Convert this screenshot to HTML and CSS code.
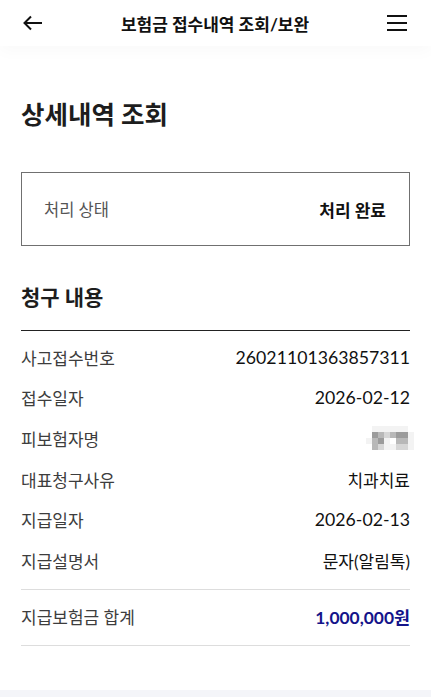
FILE: index.html
```html
<!DOCTYPE html>
<html lang="ko">
<head>
  <meta charset="UTF-8">
  <title>보험금 접수내역 조회/보완</title>
  <meta name="viewport" content="width=device-width, initial-scale=1.0">
  <link rel="stylesheet" href="styles.css">
</head>
<body>
  <header class="top-bar">
    <button class="icon-btn" aria-label="뒤로">
      <svg width="22" height="16" viewBox="0 0 22 16">
        <path d="M20 8H2.5M9 1.5L2.5 8L9 14.5" fill="none" stroke="#111" stroke-width="2"/>
      </svg>
    </button>
    <h1 class="top-title">보험금 접수내역 조회/보완</h1>
    <button class="icon-btn" aria-label="메뉴">
      <svg width="22" height="18" viewBox="0 0 22 18">
        <path d="M1 2H21M1 9H21M1 16H21" fill="none" stroke="#111" stroke-width="2"/>
      </svg>
    </button>
  </header>

  <main class="content">
    <h2 class="page-title">상세내역 조회</h2>

    <div class="status-box">
      <span class="status-label">처리 상태</span>
      <span class="status-value">처리 완료</span>
    </div>

    <h3 class="section-title">청구 내용</h3>

    <dl class="detail-list">
      <div class="detail-row">
        <dt>사고접수번호</dt>
        <dd class="num">26021101363857311</dd>
      </div>
      <div class="detail-row">
        <dt>접수일자</dt>
        <dd class="num">2026-02-12</dd>
      </div>
      <div class="detail-row">
        <dt>피보험자명</dt>
        <dd>
          <!-- masked name -->
          <span class="mosaic" aria-label="가려진 이름">
            <i class="s0"></i><i class="s1"></i><i class="s1"></i><i class="s1"></i><i class="s1"></i><i class="s1"></i><i class="s1"></i><i class="s0"></i>
            <i class="s0"></i><i class="s4"></i><i class="s3"></i><i class="s2"></i><i class="s3"></i><i class="s4"></i><i class="s4"></i><i class="s1"></i>
            <i class="s1"></i><i class="s3"></i><i class="s4"></i><i class="s1"></i><i class="s0"></i><i class="s3"></i><i class="s3"></i><i class="s1"></i>
            <i class="s0"></i><i class="s3"></i><i class="s2"></i><i class="s1"></i><i class="s1"></i><i class="s2"></i><i class="s2"></i><i class="s1"></i>
          </span>
        </dd>
      </div>
      <div class="detail-row">
        <dt>대표청구사유</dt>
        <dd>치과치료</dd>
      </div>
      <div class="detail-row">
        <dt>지급일자</dt>
        <dd class="num">2026-02-13</dd>
      </div>
      <div class="detail-row">
        <dt>지급설명서</dt>
        <dd>문자(알림톡)</dd>
      </div>
    </dl>

    <div class="total-row">
      <span class="total-label">지급보험금 합계</span>
      <span class="total-value">1,000,000원</span>
    </div>
  </main>

  <footer class="bottom-area"></footer>
</body>
</html>
```

FILE: styles.css
```css
body {
  margin: 0;
  font-family: Lato, "Noto Sans CJK KR", sans-serif;
  color: #111;
  background: #fff;
}

/* === Header === */
.top-bar {
  height: 46px;
  display: flex;
  align-items: center;
  justify-content: space-between;
  padding: 0 20px 0 19px;
  background: #fff;
  box-shadow: 0 6px 14px rgba(0, 0, 0, 0.025);
}

.icon-btn {
  background: none;
  border: none;
  padding: 0;
  width: 28px;
  height: 28px;
  display: flex;
  align-items: center;
  justify-content: center;
  cursor: pointer;
}

.top-title {
  margin: 0;
  font-size: 17px;
  font-weight: 700;
  color: #111;
}

/* === Content === */
.content {
  padding: 51px 21px 44px;
}

.page-title {
  margin: 0 0 41px;
  font-size: 25.5px;
  font-weight: 700;
  color: #1d1d1d;
  line-height: 34px;
}

.status-box {
  height: 72px;
  border: 1px solid #707070;
  display: flex;
  align-items: center;
  justify-content: space-between;
  padding: 0 23px 0 22px;
}

.status-label {
  font-size: 16.5px;
  color: #555;
}

.status-value {
  font-size: 17px;
  font-weight: 700;
  color: #111;
}

.section-title {
  margin: 36px 0 0;
  font-size: 21px;
  font-weight: 700;
  color: #1d1d1d;
  line-height: 30px;
  padding-bottom: 18px;
  border-bottom: 1.5px solid #222;
}

.detail-list {
  margin: 0;
  padding: 6px 0 8px;
  border-bottom: 1px solid #ddd;
}

.detail-row {
  height: 40.6px;
  display: flex;
  align-items: center;
  justify-content: space-between;
}

.detail-row dt {
  font-size: 17px;
  color: #3d3d3d;
}

.detail-row dd {
  margin: 0;
  font-size: 17px;
  color: #111;
}

.detail-row dd.num {
  font-size: 17.7px;
}

.mosaic {
  display: grid;
  grid-template-columns: repeat(8, 6px);
  grid-auto-rows: 6px;
  margin-right: -4px;
}

.mosaic i { display: block; }
.mosaic .s0 { background: #fff; }
.mosaic .s1 { background: #f3f3f3; }
.mosaic .s2 { background: #d6d6d6; }
.mosaic .s3 { background: #b8b8b8; }
.mosaic .s4 { background: #9b9b9b; }

.total-row {
  height: 56px;
  display: flex;
  align-items: center;
  justify-content: space-between;
  border-bottom: 1px solid #ddd;
  padding-bottom: 2px;
  box-sizing: border-box;
}

.total-label {
  font-size: 17px;
  color: #3d3d3d;
}

.total-value {
  font-size: 17.4px;
  font-weight: 700;
  color: #14148a;
}

.bottom-area {
  height: 40px;
  background: #f4f5f9;
}
```
